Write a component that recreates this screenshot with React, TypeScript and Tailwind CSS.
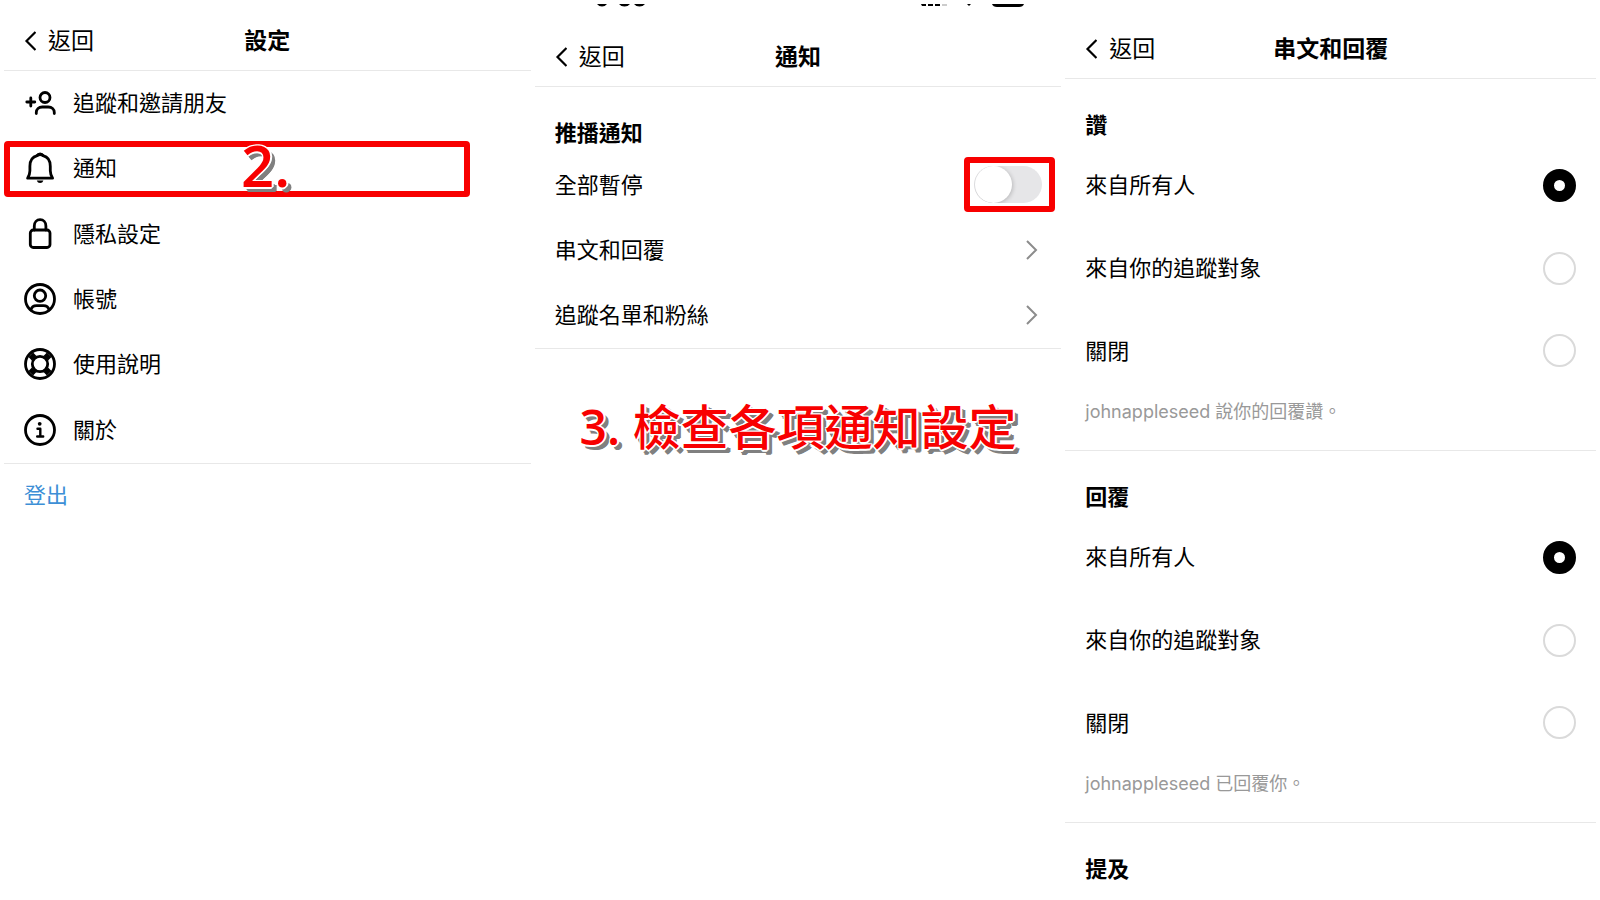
import React from "react";

const annotation =
  "font-['Open_Sans','Noto_Sans_CJK_TC',sans-serif] font-medium text-[#f80000] whitespace-nowrap [text-shadow:-1px_-1px_0_#fff,1px_-1px_0_#fff,-1px_1px_0_#fff,1px_1px_0_#fff,2px_0_0_#fff,0_2px_0_#fff,3px_3px_0_#808080,4px_4px_0_#808080,5px_4px_0_#808080,4px_5px_0_#808080]";

const strokeProps = {
  width: 32,
  height: 32,
  viewBox: "0 0 32 32",
  fill: "none",
  stroke: "currentColor",
  strokeWidth: 2.8,
  strokeLinecap: "round" as const,
  strokeLinejoin: "round" as const,
  "aria-hidden": true,
};

const AddFriendIcon = () => (
  <svg {...strokeProps}>
    <path d="M2.800 15h8M6.800 11v8" />
    <circle cx="21" cy="10.500" r="5" />
    <path d="M12.300 26.500v-1c0-3.500 2.500-5.500 6-5.500h6c3.500 0 6 2 6 5.500v1" />
  </svg>
);

const BellIcon = () => (
  <svg {...strokeProps}>
    <path d="M3.600 26.200h25c-1.600-2.600-2.300-4.500-2.300-7.500v-4.500c0-5.500-3-9.500-7.300-10.600-.6-1.300-1.600-1.800-2.900-1.800s-2.300.5-2.900 1.800C8.900 4.700 5.900 8.700 5.900 14.200v4.500c0 3-.7 4.900-2.300 7.500z" />
    <path
      d="M12.800 28.600h6.600c-.5 1.700-1.700 2.500-3.300 2.500s-2.800-.8-3.300-2.500z"
      fill="currentColor"
      stroke="none"
    />
    <path d="M13.500 3.300c1.500-.8 3.700-.8 5.200 0" />
  </svg>
);

const LockIcon = () => (
  <svg {...strokeProps}>
    <rect x="6.300" y="12" width="19.700" height="17.500" rx="3" />
    <path d="M10.300 12V8c0-4 2.500-6.300 5.800-6.300S21.900 4 21.900 8v4" />
  </svg>
);

const AccountIcon = () => (
  <svg {...strokeProps}>
    <circle cx="16" cy="16" r="14.500" />
    <circle cx="16" cy="12.700" r="5.700" />
    <path d="M6.800 27c.8-2.800 2.900-4.400 5.700-4.400h7c2.800 0 4.900 1.600 5.700 4.400" />
  </svg>
);

const HelpIcon = () => (
  <svg {...strokeProps}>
    <circle cx="16" cy="16" r="14.500" />
    <circle cx="16" cy="16" r="7.700" />
    <path
      d="M6.800 6.800l3.400 3.400M25.200 6.800l-3.400 3.400M6.800 25.200l3.400-3.400M25.200 25.200l-3.400-3.400"
      strokeWidth="6.500"
      strokeLinecap="butt"
    />
  </svg>
);

const AboutIcon = () => (
  <svg {...strokeProps}>
    <circle cx="16" cy="16" r="14.500" />
    <circle cx="15.700" cy="9.800" r="1.900" fill="currentColor" stroke="none" />
    <path d="M13.500 14.800h2.800v7.500M13.200 22.500h6" strokeWidth="2.400" />
  </svg>
);

const Header = ({ title }: { title: string }) => (
  <header className="grid h-[60px] grid-cols-[1fr_auto_1fr] items-center border-b border-[#e8e8e8] px-5 text-[23px] leading-8">
    <a href="#" className="flex items-center gap-3">
      <svg width="12" height="20" viewBox="0 0 12 20" fill="none" aria-hidden="true">
        <path d="M11.500 1L2.500 10l9 9" stroke="currentColor" strokeWidth="2.200" />
      </svg>
      返回
    </a>
    <h1 className="font-bold">{title}</h1>
  </header>
);

const SectionTitle = ({ children }: { children: React.ReactNode }) => (
  <h2 className="flex h-[65px] items-center px-5 pt-[27px] text-[22px] leading-7 font-bold">
    {children}
  </h2>
);

const menu = [
  { label: "追蹤和邀請朋友", icon: AddFriendIcon },
  { label: "通知", icon: BellIcon, marked: true },
  { label: "隱私設定", icon: LockIcon },
  { label: "帳號", icon: AccountIcon },
  { label: "使用說明", icon: HelpIcon },
  { label: "關於", icon: AboutIcon },
];

const Settings = () => (
  <section className="mr-1 pt-[11px]">
    <Header title="設定" />
    <ul className="flex h-[393px] flex-col border-b border-[#e8e8e8]">
      {menu.map(({ label, icon: Icon, marked }) => (
        <li key={label} className="relative flex-1">
          <a href="#" className="flex h-full items-center gap-[17px] px-5 pb-px">
            <Icon />
            {label}
          </a>
          {marked && (
            <div className="pointer-events-none absolute inset-y-[5px] left-0 flex w-[466px] items-center rounded-sm border-6 border-[#f80000] pb-2 pl-[231px]">
              <span className={`text-[58px] leading-none ${annotation}`}>
                <b className="font-semibold">2.</b>
              </span>
            </div>
          )}
        </li>
      ))}
    </ul>
    <button type="button" className="flex h-[62px] items-center px-5 text-[#3d8fd6]">
      登出
    </button>
  </section>
);

const StatusBar = () => (
  <div className="flex h-[27px] justify-between pt-1 pr-9 pl-[62px]">
    <svg width="48" height="3" viewBox="0 0 48 3" aria-hidden="true">
      <path d="M0 0h10Q8 2.500 5 2.500T0 0zM22 0h11q-2 2.500-5.500 2.500T22 0zM37 0h11q-2 2.500-5.500 2.500T37 0z" />
    </svg>
    <svg width="104" height="3" viewBox="0 0 104 3" aria-hidden="true">
      <path d="M0 0h5v2H1zM7 0h5v2H7zM14 0h5v2h-5zM46 0h4l-2 2z" />
      <path d="M21 0h5v2h-5z" fill="#ccc" />
      <path d="M71 0h32q-1 3-5 3H76q-4 0-5-3z" />
    </svg>
  </div>
);

const Notifications = () => (
  <section className="mr-1">
    <StatusBar />
    <Header title="通知" />
    <div className="border-b border-[#e8e8e8] pb-px">
      <SectionTitle>推播通知</SectionTitle>
      <div className="flex h-[65px] items-center justify-between pr-[6px] pl-5">
        <label htmlFor="pause-all">全部暫停</label>
        <div className="flex h-[55px] w-[91px] items-center rounded-sm border-6 border-[#f80000] pl-1">
          <input
            id="pause-all"
            type="checkbox"
            role="switch"
            className="h-[37px] w-[68px] appearance-none overflow-hidden rounded-full bg-[#e6e6e8] pl-px before:block before:size-[37px] before:rounded-full before:bg-white before:shadow-[1px_1px_4px_rgba(0,0,0,0.2)] checked:bg-black checked:before:ml-auto"
          />
        </div>
      </div>
      {["串文和回覆", "追蹤名單和粉絲"].map((label) => (
        <a key={label} href="#" className="flex h-[65px] items-center justify-between pr-4 pl-5">
          {label}
          <svg width="24" height="24" viewBox="0 0 24 24" fill="none" aria-hidden="true">
            <path d="M6 3l9 9-9 9" stroke="#8c8c8c" strokeWidth="2" />
          </svg>
        </a>
      ))}
    </div>
    <p className={`mt-[46px] text-center text-[48px] leading-16 ${annotation}`}>
      <b className="font-semibold">3.</b> 檢查各項通知設定
    </p>
  </section>
);

const groups = [
  { id: "likes", title: "讚", note: "johnappleseed 說你的回覆讚。" },
  { id: "replies", title: "回覆", note: "johnappleseed 已回覆你。" },
];

const options = ["來自所有人", "來自你的追蹤對象", "關閉"];

const Threads = () => (
  <section className="pt-[19px]">
    <Header title="串文和回覆" />
    {groups.map((group) => (
      <div key={group.id} className="border-b border-[#e8e8e8]">
        <SectionTitle>{group.title}</SectionTitle>
        <div className="flex h-[248px] flex-col" role="radiogroup" aria-label={group.title}>
          {options.map((option, i) => (
            <label key={option} className="flex flex-1 items-center justify-between px-5">
              {option}
              <input
                type="radio"
                name={group.id}
                defaultChecked={i === 0}
                className="size-[33px] appearance-none rounded-full border-2 border-[#dadada] checked:border-[11px] checked:border-black"
              />
            </label>
          ))}
        </div>
        <p className="flex h-[58px] items-center px-5 pb-[18px] text-lg text-[#999]">{group.note}</p>
      </div>
    ))}
    <SectionTitle>提及</SectionTitle>
  </section>
);

export default function App() {
  return (
    <main
      lang="zh-Hant"
      className="grid min-h-screen grid-cols-3 bg-white px-1 font-[Inter,'Noto_Sans_CJK_TC',sans-serif] text-[22px] leading-8 text-black"
    >
      <Settings />
      <Notifications />
      <Threads />
    </main>
  );
}
